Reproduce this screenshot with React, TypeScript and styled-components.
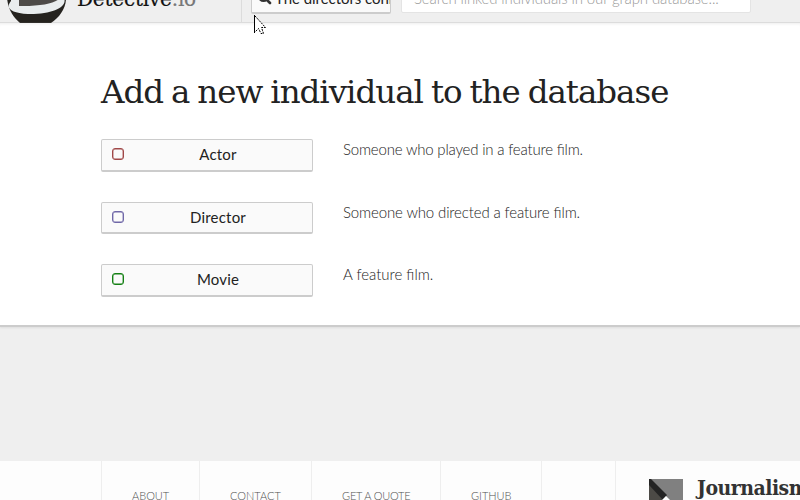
import React from "react";
import styled, { createGlobalStyle } from "styled-components";

const GlobalStyle = createGlobalStyle`
  * { box-sizing: border-box; }
  body { margin: 0; background: #efefef; font-family: Lato, sans-serif; }
`;

const Page = styled.div`
  position: relative;
  display: flex;
  flex-direction: column;
  width: 800px;
  height: 500px;
  overflow: hidden;
  background: #efefef;
`;

const Header = styled.header`
  display: flex;
  align-items: flex-end;
  flex: none;
  height: 23px;
  overflow: hidden;
  box-shadow: inset 0 -1px #dcdcdc;
`;

const Brand = styled.div`
  display: flex;
  align-items: flex-end;
  flex: none;
  width: 242px;
  height: 60px;
  padding-left: 7px;
  border-right: 1px solid #dcdcdc;
`;

const BrandName = styled.div`
  margin: 0 0 12px 10px;
  color: #111;
  font: 20px/24px "DejaVu Serif", serif;
  letter-spacing: -0.2px;
  -webkit-text-stroke: 0.2px;
  white-space: nowrap;
`;

const BrandSuffix = styled.span`
  color: #777;
`;

const TopicSelect = styled.button`
  display: flex;
  align-items: center;
  flex: none;
  width: 140px;
  height: 32px;
  margin: 0 0 9px 9px;
  padding: 0 0 0 6px;
  overflow: hidden;
  background: #fafafa;
  border: 1px solid #ccc;
  border-bottom-width: 2px;
  border-radius: 2px;
  color: #222;
  font: 15px/20px Lato, sans-serif;
  letter-spacing: -0.05px;
  white-space: nowrap;
`;

const SearchIcon = styled.svg`
  flex: none;
  margin-right: 3px;
`;

const SearchField = styled.div`
  flex: none;
  width: 350px;
  height: 33px;
  margin: 0 0 10px 10px;
  padding: 7px 12px;
  background: #fff;
  border: 1px solid #e4e4e4;
  border-radius: 2px;
  color: #999;
  font: 300 15px/20px Lato, sans-serif;
  letter-spacing: -0.12px;
  white-space: nowrap;
`;

const Main = styled.main`
  flex: none;
  height: 304px;
  padding: 47px 101px 0;
  background: #fff;
  border-bottom: 2px solid #ccc;
  box-shadow: inset 0 3px 3px -2px #eee, 0 1px 2px #ddd;
`;

const Title = styled.h1`
  margin: 0;
  color: #222;
  font: 400 32.5px/44px "DejaVu Serif", serif;
  letter-spacing: -1px;
  word-spacing: -1.4px;
  white-space: nowrap;
`;

const TypeList = styled.div`
  display: grid;
  grid-template-rows: 63px 62px 33px;
  margin-top: 25px;
`;

const TypeRow = styled.div`
  display: flex;
  align-items: flex-start;
  gap: 30px;
`;

const TypeButton = styled.button<{ $height: number }>`
  display: flex;
  align-items: center;
  width: 212px;
  height: ${(p) => p.$height}px;
  padding: 0 10px 2px;
  background: #fafafa;
  border: 1px solid #ccc;
  border-bottom-width: 2px;
  border-radius: 2px;
  color: #222;
  font: 15px/20px Lato, sans-serif;
  letter-spacing: 0.2px;
`;

const Swatch = styled.span<{ $color: string }>`
  flex: none;
  width: 12px;
  height: 12px;
  border: 1px solid ${(p) => p.$color};
  border-radius: 3px;
  box-shadow: inset 0 0 0 0.4px ${(p) => p.$color};
`;

const TypeLabel = styled.span`
  flex: 1;
  padding-left: 10px;
  text-align: center;
`;

const Description = styled.p<{ $tracking: number }>`
  margin: 0;
  color: #1c1c1c;
  font: 300 15px/21px Lato, sans-serif;
  letter-spacing: ${(p) => p.$tracking}px;
  font-feature-settings: "liga" 1;
  white-space: nowrap;
`;

const Footer = styled.footer`
  display: flex;
  flex: none;
  height: 90px;
  margin-top: 134px;
  padding-left: 101px;
  background: #fdfdfd;
`;

const FooterCell = styled.div<{ $width: number; $tracking?: number }>`
  flex: none;
  width: ${(p) => p.$width}px;
  padding: 28px 0 0 30px;
  border-left: 1px solid #eee;
  color: #505050;
  font: 300 11px/14px Lato, sans-serif;
  letter-spacing: ${(p) => p.$tracking ?? 0}px;
  white-space: nowrap;
`;

const Partner = styled.div`
  display: flex;
  align-items: flex-start;
  gap: 14px;
  padding: 18px 0 0 33px;
  border-left: 1px solid #eee;
`;

const PartnerName = styled.div`
  margin-top: -4px;
  color: #333;
  font: bold 21px/26px "DejaVu Serif Condensed", "DejaVu Serif", serif;
  font-stretch: condensed;
  letter-spacing: -0.5px;
`;

const Pointer = styled.svg`
  position: absolute;
  left: 254px;
  top: 15px;
`;

const types = [
  { name: "Actor", color: "#a04848", height: 33, tracking: -0.19, text: "Someone who played in a feature film." },
  { name: "Director", color: "#7068a8", height: 32, tracking: -0.13, text: "Someone who directed a feature film." },
  { name: "Movie", color: "#148014", height: 33, tracking: 0, text: "A feature film." },
];

const links = [
  { label: "ABOUT", width: 98 },
  { label: "CONTACT", width: 112 },
  { label: "GET A QUOTE", width: 129, tracking: -0.2 },
  { label: "GITHUB", width: 101 },
  { label: "", width: 74 },
];

export default function App() {
  return (
    <Page>
      <GlobalStyle />
      <Header>
        <Brand>
          <svg width="60" height="60" viewBox="0 0 60 60">
            <path d="M0 35C1 46 6 54 13 60H44C53 54 59 45 59 35Z" fill="#25231f" />
            <path d="M4 35H57C61 44 45 51.5 21 51C8 50.5 2 47 1.7 43.5C1.6 41 3 39.5 4 38Z" fill="#e9edee" />
            <path d="M12 35H53C49 40 34 43.5 12 43Z" fill="#4d4b48" />
          </svg>
          <BrandName>Detective<BrandSuffix>.io</BrandSuffix></BrandName>
        </Brand>
        <TopicSelect>
          <SearchIcon width="14" height="14" viewBox="0 0 14 14" fill="none" stroke="#333" strokeWidth="2.6">
            <circle cx="5.5" cy="5.5" r="4.2" />
            <path d="M8.5 8.5L12 12" strokeLinecap="round" />
          </SearchIcon>
          The directors connection
        </TopicSelect>
        <SearchField>Search linked individuals in our graph database...</SearchField>
      </Header>
      <Main>
        <Title>Add a new individual to the database</Title>
        <TypeList>
          {types.map((t) => (
            <TypeRow key={t.name}>
              <TypeButton $height={t.height}>
                <Swatch $color={t.color} />
                <TypeLabel>{t.name}</TypeLabel>
              </TypeButton>
              <Description $tracking={t.tracking}>{t.text}</Description>
            </TypeRow>
          ))}
        </TypeList>
      </Main>
      <Footer>
        {links.map((l) => (
          <FooterCell key={l.width} $width={l.width} $tracking={l.tracking}>{l.label}</FooterCell>
        ))}
        <Partner>
          <svg width="34" height="35" viewBox="0 0 34 35">
            <path d="M0 0H34V35H0Z" fill="#808080" />
            <path d="M0 4L18 22V35H0Z" fill="#4c4a46" />
            <path d="M0 0H2L18 16L14 21L0 6Z" fill="#242424" />
            <path d="M12 22L17 17L22 22V35H12Z" fill="#fff" />
          </svg>
          <PartnerName>Journalism++</PartnerName>
        </Partner>
      </Footer>
      <Pointer width="13" height="20" viewBox="0 0 13 20">
        <path d="M.5 .5V17.5L4 14L7 19H9L7.5 13H12Z" fill="#fff" />
        <path d="M.5 0V18" stroke="#000" />
        <path d="M1 1L11.5 12.5H7.5L9.5 18.5H7L4.5 13.5L1 17" fill="none" stroke="#000" strokeDasharray="2 1" />
      </Pointer>
    </Page>
  );
}
